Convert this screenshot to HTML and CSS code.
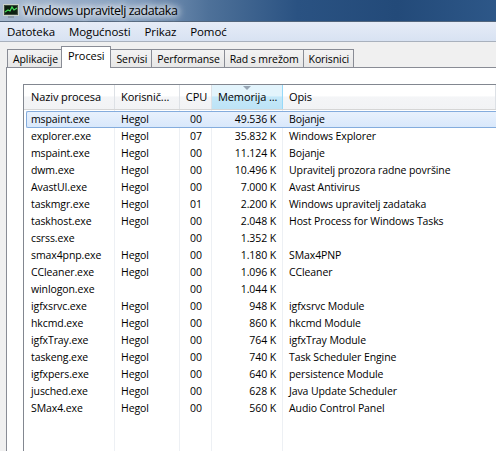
FILE: index.html
```html
<!DOCTYPE html>
<html lang="hr">
<head>
  <meta charset="UTF-8">
  <title>Windows upravitelj zadataka</title>
  <link rel="stylesheet" href="styles.css">
</head>
<body>
  <div class="titlebar">
    <svg class="app-icon" width="16" height="14" viewBox="0 0 16 14">
      <rect x="0.5" y="0.5" width="15" height="11" fill="#3c4a3c" stroke="#c9d2c9"/>
      <rect x="2" y="2" width="12" height="8" fill="#0c1f10"/>
      <polyline points="2,8 5,6 7,7 9,3 11,6 14,4" fill="none" stroke="#45e05a" stroke-width="1.2"/>
      <rect x="5" y="12" width="6" height="2" fill="#8a9aa8"/>
    </svg>
    <span class="title">Windows upravitelj zadataka</span>
  </div>

  <div class="menubar">
    <span>Datoteka</span>
    <span>Mogućnosti</span>
    <span>Prikaz</span>
    <span>Pomoć</span>
  </div>

  <div class="main">
    <div class="tabs">
      <div class="tab">Aplikacije</div>
      <div class="tab active">Procesi</div>
      <div class="tab">Servisi</div>
      <div class="tab">Performanse</div>
      <div class="tab">Rad s mrežom</div>
      <div class="tab">Korisnici</div>
    </div>

    <div class="panel">
      <div class="list">
        <div class="row head">
          <div class="c name">Naziv procesa</div>
          <div class="c user">Korisnič...</div>
          <div class="c cpu">CPU</div>
          <div class="c mem sorted"><span class="arrow"></span>Memorija ...</div>
          <div class="c desc">Opis</div>
        </div>
        <div class="body">
          <div class="cols">
            <div class="name"></div><div class="user"></div><div class="cpu"></div><div class="mem"></div><div class="desc"></div>
          </div>
          <div class="row selected"><div class="c name">mspaint.exe</div><div class="c user">Hegol</div><div class="c cpu">00</div><div class="c mem">49.536 K</div><div class="c desc">Bojanje</div></div>
          <div class="row"><div class="c name">explorer.exe</div><div class="c user">Hegol</div><div class="c cpu">07</div><div class="c mem">35.832 K</div><div class="c desc">Windows Explorer</div></div>
          <div class="row"><div class="c name">mspaint.exe</div><div class="c user">Hegol</div><div class="c cpu">00</div><div class="c mem">11.124 K</div><div class="c desc">Bojanje</div></div>
          <div class="row"><div class="c name">dwm.exe</div><div class="c user">Hegol</div><div class="c cpu">00</div><div class="c mem">10.496 K</div><div class="c desc">Upravitelj prozora radne površine</div></div>
          <div class="row"><div class="c name">AvastUI.exe</div><div class="c user">Hegol</div><div class="c cpu">00</div><div class="c mem">7.000 K</div><div class="c desc">Avast Antivirus</div></div>
          <div class="row"><div class="c name">taskmgr.exe</div><div class="c user">Hegol</div><div class="c cpu">01</div><div class="c mem">2.200 K</div><div class="c desc">Windows upravitelj zadataka</div></div>
          <div class="row"><div class="c name">taskhost.exe</div><div class="c user">Hegol</div><div class="c cpu">00</div><div class="c mem">2.048 K</div><div class="c desc">Host Process for Windows Tasks</div></div>
          <div class="row"><div class="c name">csrss.exe</div><div class="c user"></div><div class="c cpu">00</div><div class="c mem">1.352 K</div><div class="c desc"></div></div>
          <div class="row"><div class="c name">smax4pnp.exe</div><div class="c user">Hegol</div><div class="c cpu">00</div><div class="c mem">1.180 K</div><div class="c desc">SMax4PNP</div></div>
          <div class="row"><div class="c name">CCleaner.exe</div><div class="c user">Hegol</div><div class="c cpu">00</div><div class="c mem">1.096 K</div><div class="c desc">CCleaner</div></div>
          <div class="row"><div class="c name">winlogon.exe</div><div class="c user"></div><div class="c cpu">00</div><div class="c mem">1.044 K</div><div class="c desc"></div></div>
          <div class="row"><div class="c name">igfxsrvc.exe</div><div class="c user">Hegol</div><div class="c cpu">00</div><div class="c mem">948 K</div><div class="c desc">igfxsrvc Module</div></div>
          <div class="row"><div class="c name">hkcmd.exe</div><div class="c user">Hegol</div><div class="c cpu">00</div><div class="c mem">860 K</div><div class="c desc">hkcmd Module</div></div>
          <div class="row"><div class="c name">igfxTray.exe</div><div class="c user">Hegol</div><div class="c cpu">00</div><div class="c mem">764 K</div><div class="c desc">igfxTray Module</div></div>
          <div class="row"><div class="c name">taskeng.exe</div><div class="c user">Hegol</div><div class="c cpu">00</div><div class="c mem">740 K</div><div class="c desc">Task Scheduler Engine</div></div>
          <div class="row"><div class="c name">igfxpers.exe</div><div class="c user">Hegol</div><div class="c cpu">00</div><div class="c mem">640 K</div><div class="c desc">persistence Module</div></div>
          <div class="row"><div class="c name">jusched.exe</div><div class="c user">Hegol</div><div class="c cpu">00</div><div class="c mem">628 K</div><div class="c desc">Java Update Scheduler</div></div>
          <div class="row"><div class="c name">SMax4.exe</div><div class="c user">Hegol</div><div class="c cpu">00</div><div class="c mem">560 K</div><div class="c desc">Audio Control Panel</div></div>
        </div>
      </div>
    </div>
  </div>
</body>
</html>
```

FILE: styles.css
```css
html, body {
  margin: 0;
  padding: 0;
}
body {
  font-family: "Open Sans", "Noto Sans", sans-serif;
  font-size: 10.5px;
  letter-spacing: -0.1px;
  color: #000;
  background: #f0f0f0;
  width: 496px;
  height: 451px;
  overflow: hidden;
  display: flex;
  flex-direction: column;
}
.titlebar {
  height: 21px;
  flex: none;
  display: flex;
  align-items: center;
  background: linear-gradient(to right, #a6b8ce 0, #8aa3c2 25%, #4e7199 42%, #2a5282 60%, #234a79 80%, #2d5788 100%);
  border-bottom: 1px solid #52657c;
}
.app-icon {
  margin: 0 4px 0 3px;
}
.title {
  font-size: 12.5px;
  letter-spacing: -0.45px;
  color: #000;
  text-shadow: 0 0 6px #fff, 0 0 8px #fff, 0 0 10px #fff;
}
.menubar {
  height: 19px;
  flex: none;
  display: flex;
  align-items: center;
  padding-left: 1px;
  background: linear-gradient(#e6ecf7, #d8e2f2);
  border-bottom: 1px solid #a9b1bd;
  font-size: 11.5px;
}
.menubar span {
  padding: 0 7px 0 6px;
  margin-right: 1px;
}
.main {
  flex: 1;
  min-height: 0;
  display: flex;
  flex-direction: column;
  padding: 5px 0 0 6px;
  overflow: hidden;
}
.tabs {
  display: flex;
  align-items: flex-end;
  height: 21px;
  flex: none;
  padding-left: 1px;
}
.tab {
  height: 18px;
  line-height: 18px;
  padding: 0 4px 0 5px;
  border: 1px solid #898c95;
  border-bottom: none;
  margin-right: -1px;
  background: linear-gradient(#f3f3f3, #e6e6e6);
}
.tab.active {
  height: 21px;
  line-height: 18px;
  padding: 0 6px;
  margin: 0 -1px 0 -1px;
  background: #fff;
  position: relative;
  z-index: 1;
  font-size: 11px;
}
.panel {
  flex: 1;
  min-height: 0;
  display: flex;
  flex-direction: column;
  background: #fff;
  border-left: 1px solid #898c95;
  border-top: 1px solid #898c95;
  padding: 16px 0 0 16px;
  margin-top: -1px;
}
.list {
  flex: 1;
  min-height: 0;
  display: flex;
  flex-direction: column;
  border: 1px solid #828790;
  border-right: none;
  border-bottom: none;
}
.row {
  display: flex;
  height: 17px;
  line-height: 17px;
  flex: none;
}
.c {
  white-space: nowrap;
  overflow: hidden;
}
.name { width: 91px; padding-left: 7px; box-sizing: border-box; flex: none; }
.user { width: 65px; padding-left: 6px; box-sizing: border-box; flex: none; }
.cpu { width: 32px; text-align: center; box-sizing: border-box; flex: none; }
.mem { width: 71px; text-align: right; padding-right: 7px; box-sizing: border-box; flex: none; }
.desc { flex: 1; padding-left: 6px; box-sizing: border-box; }
.row.head {
  height: 24px;
  line-height: 24px;
  font-size: 11px;
  background: linear-gradient(#fff 0, #fff 45%, #f4f5f7 50%, #f2f3f5 100%);
  border-bottom: 1px solid #d5d5d5;
}
.row.head .c {
  border-right: 1px solid #dde1e6;
}
.row.head .cpu {
  padding-left: 2px;
}
.row.head .mem {
  text-align: left;
  padding-left: 6px;
  position: relative;
}
.row.head .sorted {
  background: linear-gradient(#e3f4fc 0, #e3f4fc 45%, #c4e8f9 50%, #bde3f6 100%);
  border-right: 1px solid #96d9f9;
}
.arrow {
  position: absolute;
  top: 1px;
  left: 31px;
  width: 0;
  height: 0;
  border-left: 4px solid transparent;
  border-right: 4px solid transparent;
  border-top: 4px solid #97a5b4;
}
.body {
  flex: 1;
  min-height: 0;
  position: relative;
  padding-top: 1px;
}
.cols {
  position: absolute;
  top: 0;
  left: 0;
  right: 0;
  bottom: 0;
  display: flex;
}
.cols div {
  border-right: 1px solid #edf0f4;
}
.cols .desc {
  border-right: none;
}
.body .row {
  position: relative;
}
.row.selected {
  margin: 0 0 0 2px;
  background: linear-gradient(#e8f1fd, #d9e8fb);
  border: 1px solid #84acdd;
  border-right: none;
  border-radius: 2px 0 0 2px;
  height: 15px;
  line-height: 15px;
}
.row.selected .name { width: 88px; padding-left: 4px; }
```
